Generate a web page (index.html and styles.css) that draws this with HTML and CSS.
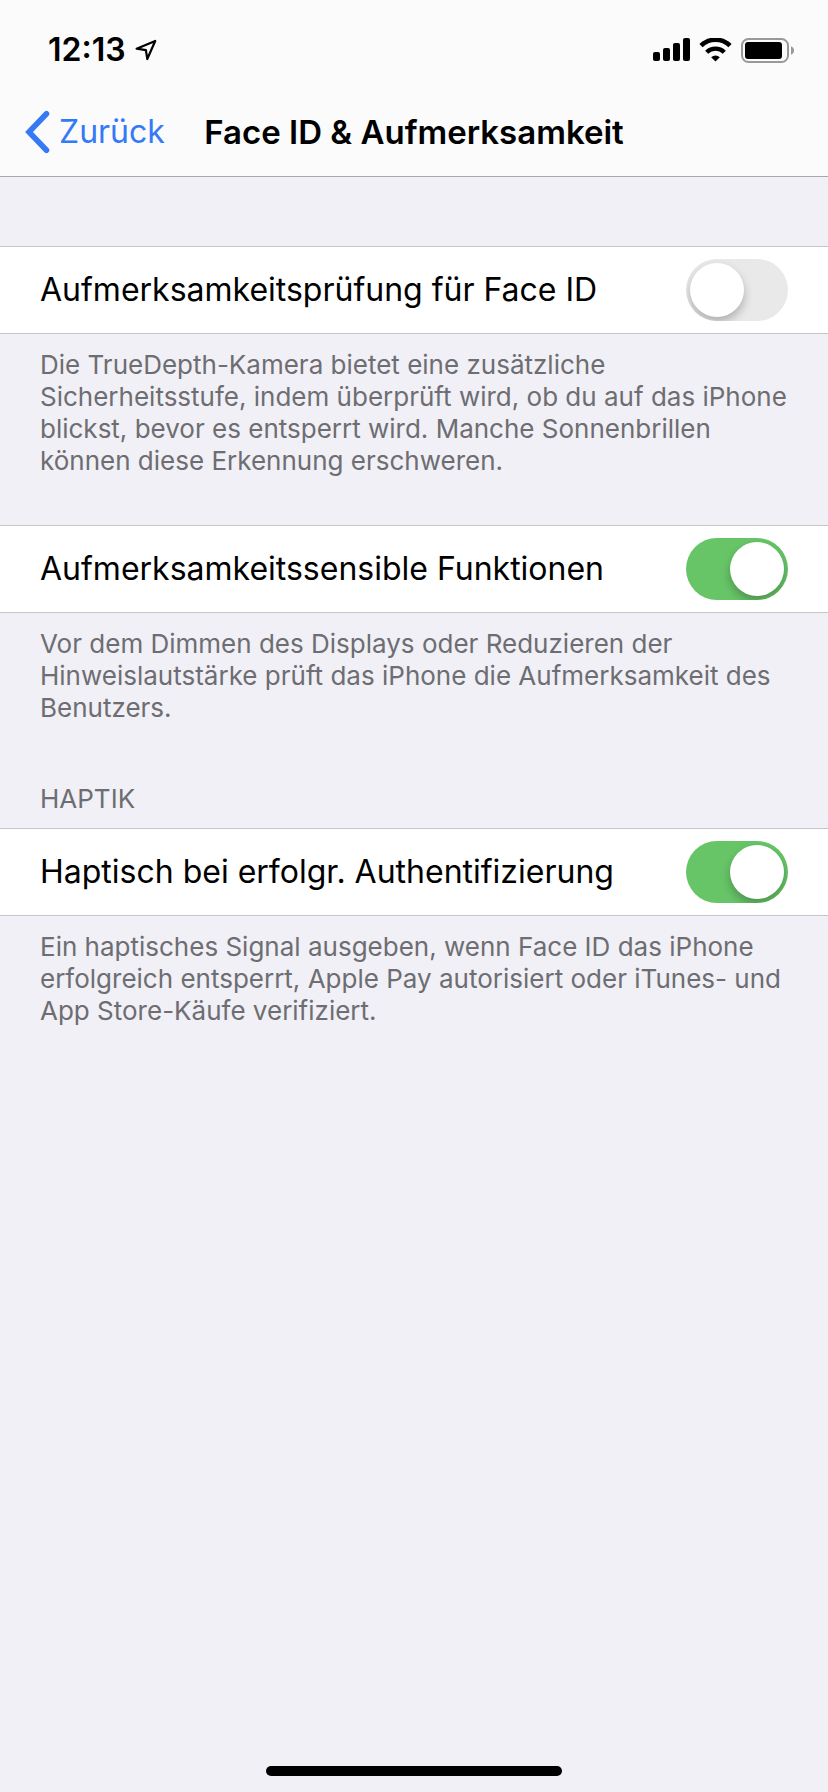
FILE: index.html
```html
<!DOCTYPE html>
<html lang="de">
<head>
  <meta charset="utf-8">
  <meta name="viewport" content="width=device-width, initial-scale=1">
  <title>Face ID &amp; Aufmerksamkeit</title>
  <link rel="stylesheet" href="styles.css">
</head>
<body class="screen">
  <header class="header">
    <div class="status">
      <div class="status-left">
        <time class="clock">12:13</time>
        <svg class="icon" width="22" height="22" viewBox="0 0 22 22" aria-hidden="true">
          <path d="M1.6 9.7 L20.2 2 L12.3 20 L10.9 11.2 Z" fill="none" stroke="#000" stroke-width="2.200" stroke-linejoin="round"/>
        </svg>
      </div>
      <div class="status-right">
        <svg class="icon" width="37" height="24" viewBox="0 0 37 24" aria-hidden="true">
          <rect x="0" y="14" width="7" height="9" rx="2"/>
          <rect x="10" y="10" width="7" height="13" rx="2"/>
          <rect x="20" y="5" width="7" height="18" rx="2"/>
          <rect x="30" y="0" width="7" height="23" rx="2"/>
        </svg>
        <svg class="icon" width="33" height="24" viewBox="0 0 33 24" aria-hidden="true">
          <path d="M2 7.6 A21 21 0 0 1 31 7.6" fill="none" stroke="#000" stroke-width="4.6"/>
          <path d="M7.7 14.2 A12.6 12.6 0 0 1 25.3 14.2" fill="none" stroke="#000" stroke-width="4.4"/>
          <path d="M16.500 23.600 L12.200 19.200 A6.200 6.200 0 0 1 20.800 19.200 Z"/>
        </svg>
        <svg class="icon" width="54" height="25" viewBox="0 0 54 25" aria-hidden="true">
          <rect x="1" y="1" width="46" height="23" rx="6.500" fill="none" stroke="#999" stroke-width="2"/>
          <rect x="4" y="4" width="37" height="17" rx="3"/>
          <path d="M50 8.200 Q53 9.400 53 12.500 Q53 15.600 50 16.800 Z" fill="#999"/>
        </svg>
      </div>
    </div>
    <nav class="nav">
      <button class="back" type="button">
        <svg class="icon" width="26" height="44" viewBox="0 0 26 44" aria-hidden="true">
          <path d="M21.500 3.700 L4 22 L21.500 40.300" fill="none" stroke="#347af6" stroke-width="5.600" stroke-linecap="round" stroke-linejoin="miter"/>
        </svg>
        <span>Zurück</span>
      </button>
      <h1 class="title">Face ID &amp; Aufmerksamkeit</h1>
    </nav>
  </header>

  <main class="settings">
    <section class="group">
      <div class="row">
        <label class="label" for="attention-check">Aufmerksamkeitsprüfung für Face ID</label>
        <input class="switch" type="checkbox" role="switch" id="attention-check">
      </div>
      <p class="note">Die TrueDepth-Kamera bietet eine zusätzliche Sicherheitsstufe, indem überprüft wird, ob du auf das iPhone blickst, bevor es entsperrt wird. Manche Sonnenbrillen können diese Erkennung erschweren.</p>
    </section>

    <section class="group">
      <div class="row">
        <label class="label" for="attention-features">Aufmerksamkeitssensible Funktionen</label>
        <input class="switch" type="checkbox" role="switch" id="attention-features" checked>
      </div>
      <p class="note">Vor dem Dimmen des Displays oder Reduzieren der Hinweislautstärke prüft das iPhone die Aufmerksamkeit des Benutzers.</p>
    </section>

    <section class="group">
      <h2 class="heading">HAPTIK</h2>
      <div class="row">
        <label class="label" for="haptics">Haptisch bei erfolgr. Authentifizierung</label>
        <input class="switch" type="checkbox" role="switch" id="haptics" checked>
      </div>
      <p class="note">Ein haptisches Signal ausgeben, wenn Face ID das iPhone erfolgreich entsperrt, Apple Pay autorisiert oder iTunes- und App Store-Käufe verifiziert.</p>
    </section>
  </main>

  <footer class="home"><div class="home-bar"></div></footer>
</body>
</html>
```
FILE: styles.css
```css
* {
  box-sizing: border-box;
}

.screen {
  display: flex;
  flex-direction: column;
  min-height: 100vh;
  margin: 0;
  background: #f0f0f6;
  color: #000;
  font-family: Inter, "Liberation Sans", sans-serif;
}

.icon {
  display: block;
  flex: none;
}

.header {
  background: #fbfbfc;
  border-bottom: 1px solid #a8a8ac;
}

.status {
  display: flex;
  align-items: center;
  justify-content: space-between;
  height: 88px;
  padding: 12px 33px 0 48px;
}

.status-left {
  display: flex;
  align-items: center;
  gap: 9px;
}

.status-right {
  display: flex;
  align-items: center;
  gap: 9px;
}

.clock {
  font-size: 32px;
  font-weight: 600;
  line-height: 36px;
}

.nav {
  display: grid;
  grid-template-columns: 1fr auto 1fr;
  align-items: center;
  height: 88px;
  padding: 0 25px;
}

.back {
  display: flex;
  align-items: center;
  justify-self: start;
  gap: 8px;
  padding: 0;
  border: 0;
  background: none;
  color: #347af6;
  font: inherit;
  font-size: 32px;
  line-height: 40px;
}

.title {
  margin: 0;
  font-size: 33px;
  font-weight: 600;
  line-height: 40px;
  white-space: nowrap;
}

.settings {
  flex: 1;
  padding-top: 69px;
}

.group {
  margin-bottom: 48px;
}

.row {
  display: flex;
  align-items: center;
  justify-content: space-between;
  gap: 24px;
  min-height: 88px;
  padding: 12px 40px;
  border-top: 1px solid #c6c6c9;
  border-bottom: 1px solid #c6c6c9;
  background: #fff;
}

.label {
  font-size: 32px;
  line-height: 40px;
}

.heading {
  margin: 0;
  padding: 11px 40px 13px;
  color: #6d6d72;
  font-size: 26px;
  font-weight: 400;
  line-height: 32px;
}

.note {
  margin: 0;
  padding: 15px 40px 0;
  color: #6d6d72;
  font-size: 26px;
  line-height: 32px;
}

.switch {
  flex: none;
  width: 102px;
  height: 62px;
  margin: 0;
  padding: 4px;
  overflow: hidden;
  border-radius: 31px;
  background: #e9e9e9;
  appearance: none;
}

.switch::before {
  content: "";
  display: block;
  width: 54px;
  height: 54px;
  border-radius: 50%;
  background: #fff;
  box-shadow: 0 5px 10px rgba(0, 0, 0, 0.25);
}

.switch:checked {
  background: #67c567;
}

.switch:checked::before {
  margin-left: auto;
}

.home {
  display: flex;
  justify-content: center;
  padding-bottom: 16px;
}

.home-bar {
  width: 296px;
  height: 10px;
  border-radius: 5px;
  background: #000;
}
```
